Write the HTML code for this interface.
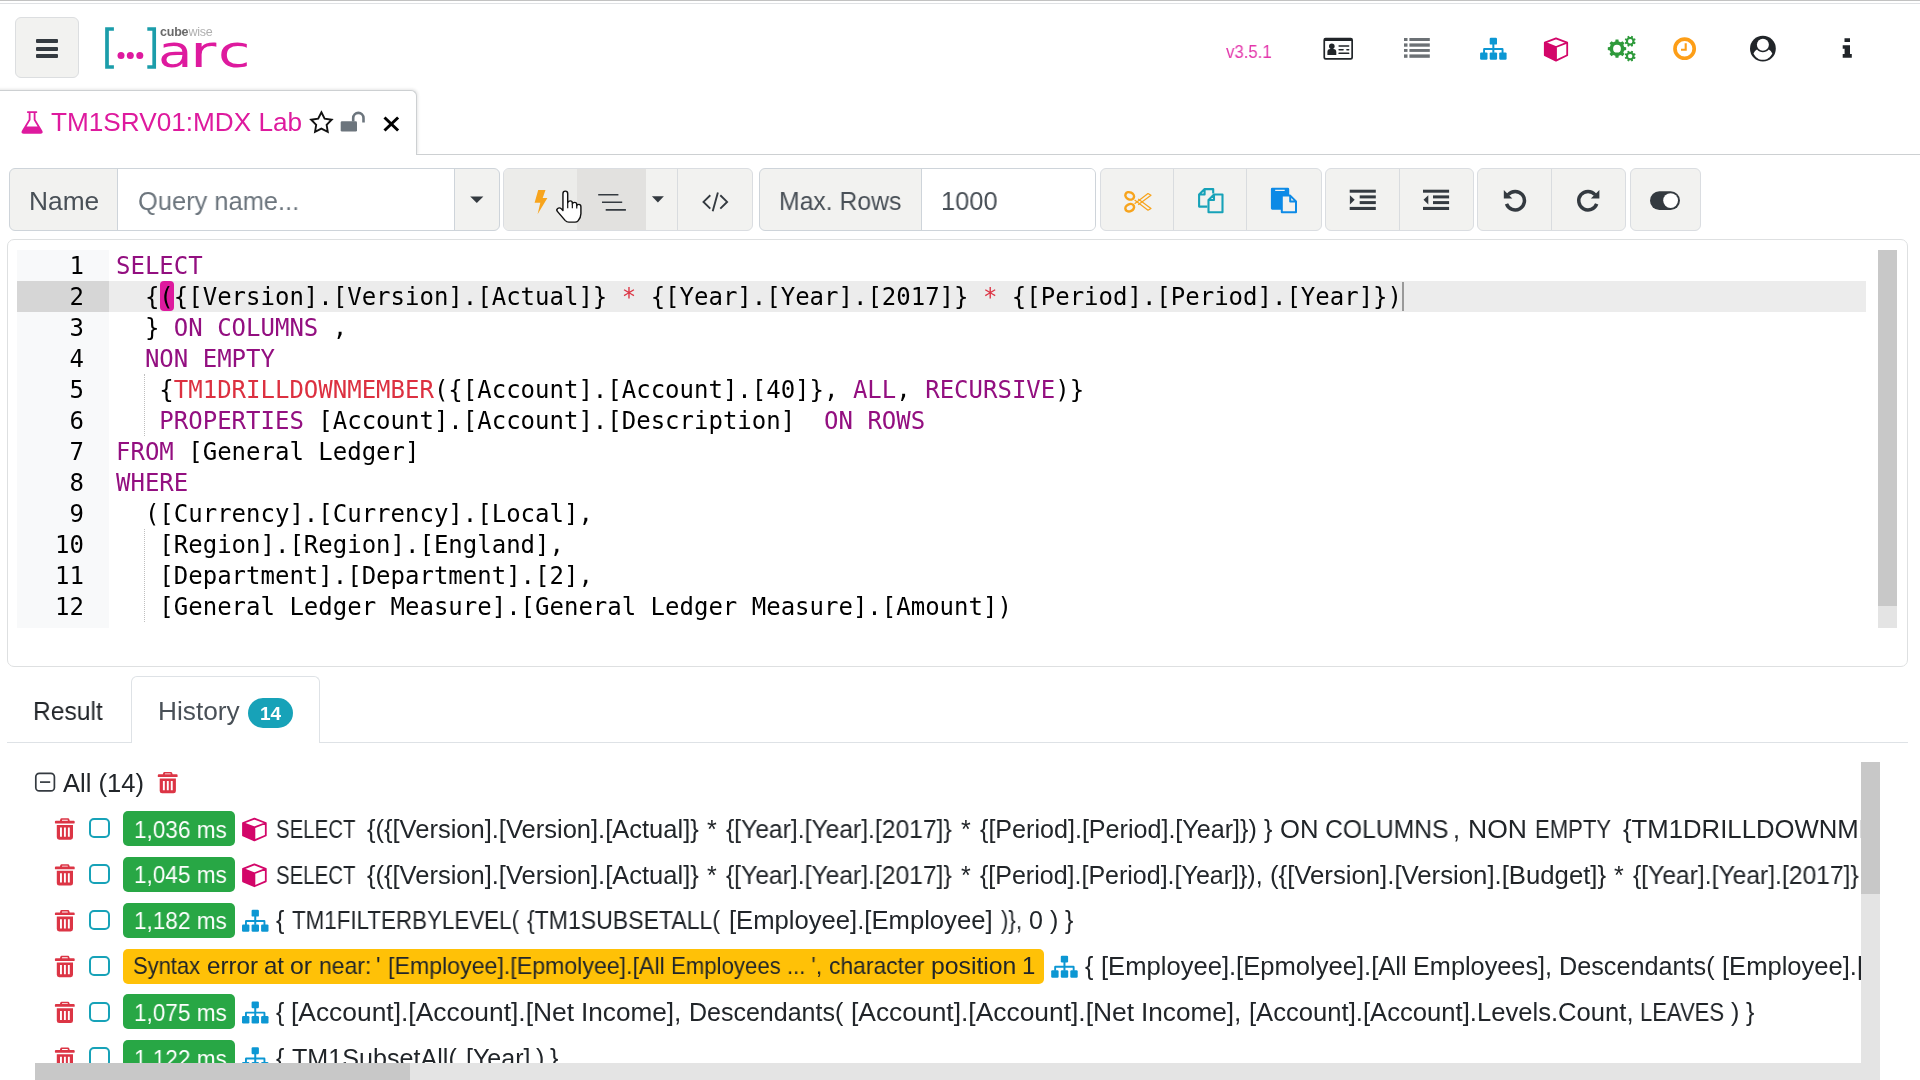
<!DOCTYPE html>
<html lang="en">
<head>
<meta charset="utf-8">
<title>Arc - TM1SRV01:MDX Lab</title>
<style>
*{box-sizing:border-box;margin:0;padding:0}
html,body{width:1920px;height:1080px;overflow:hidden;background:#fff}
body{font-family:"Liberation Sans",sans-serif;color:#212529;position:relative}
.abs{position:absolute}
svg{position:absolute;overflow:visible}
.t{position:absolute;white-space:pre;line-height:1;transform-origin:0 50%;will-change:transform}
.line0{left:0;top:0;width:1920px;height:1px;background:#c2c2c2}
.line1{left:0;top:3px;width:1920px;height:1px;background:#dfe1e4}
.menu-btn{left:15px;top:17px;width:64px;height:61px;border:1px solid #dcdee0;border-radius:6px;background:#f2f2f0}
.menu-btn i{position:absolute;left:20px;width:22px;height:4px;border-radius:1px;background:#343a40}
.ptab{left:-4px;top:90px;width:421px;height:65px;border:1px solid #cdd0d2;border-bottom:none;border-radius:0 6px 0 0;background:#fff;box-shadow:1px -1px 3px rgba(0,0,0,.10);clip-path:inset(-6px -6px 0 0)}
.ptab-line{left:416px;top:154px;width:1504px;height:1px;background:#cdd0d2}
.grp{top:168px;height:63px;border:1px solid #dadde1;border-radius:6px;background:#f2f2f0;overflow:hidden}
.grp.ig{border-color:#ced4da}
.grp.ig .inp{border-color:#ced4da}
.grp .sep{position:absolute;top:0;width:1px;height:61px;background:#d9dcdf}
.grp .inp{position:absolute;top:0;height:61px;background:#fff;border-left:1px solid #d6dade;border-right:1px solid #d6dade}
.card{left:7px;top:239px;width:1901px;height:428px;border:1px solid #dee0e1;border-radius:7px;background:#fff}
.gutter{left:17px;top:250px;width:92px;height:378px;background:#f8f9fa}
.code{will-change:transform;font-family:"DejaVu Sans Mono","Liberation Mono",monospace;font-size:24px;line-height:31px;color:#000;white-space:pre}
.ln{left:17px;top:251px;width:92px;text-align:right;padding-right:25px}
.src{left:116px;top:251px}
.k{color:#930f80}.f{color:#dc3040}.o{color:#dc3545}
.nav-line{left:7px;top:742px;width:1901px;height:1px;background:#dee2e6}
.rtab{left:131px;top:676px;width:189px;height:67px;border:1px solid #dee2e6;border-bottom:none;border-radius:6px 6px 0 0;background:#fff}
.badge14{left:248px;top:698px;width:45px;height:30px;border-radius:15px;background:#17a2b8}
.hist{left:35px;top:762px;width:1826px;height:301px;overflow:hidden}
.bdg{position:absolute;height:35px;border-radius:5px;background:#28a745}
.bdg.w{background:#ffc107}
.cb{position:absolute;left:54px;width:21px;height:20px;border:2px solid #17a2b8;border-radius:5px;background:#fff}
.sb-t{background:#e4e4e4}.sb-h{background:#c8c8c8}
</style>
</head>
<body>
<div class="abs line0"></div><div class="abs line1"></div>

<!-- HEADER -->
<div class="abs menu-btn"><i style="top:21.4px"></i><i style="top:28.7px"></i><i style="top:36.2px"></i></div>
<div id="logo">
<svg style="left:105px;top:27px" width="52" height="42" viewBox="0 0 52 42">
  <path d="M8.900 2H2V40H8.900" fill="none" stroke="#1b9daa" stroke-width="3.700"/>
  <path d="M42.300 2H49.200V40H42.300" fill="none" stroke="#1b9daa" stroke-width="3.700"/>
  <circle cx="16" cy="28.400" r="3.500" fill="#de1a9e"/><circle cx="25.300" cy="28.400" r="3.500" fill="#de1a9e"/><circle cx="34.800" cy="28.400" r="3.500" fill="#de1a9e"/>
</svg>
<span class="t" style="left:160px;top:25.700px;font-size:12.500px;font-weight:bold;color:#6a6a6a;letter-spacing:-0.200px">cube<span style="color:#b0b0b0;font-weight:normal">wise</span></span>
<span class="arc"><span class="t" style="left:157.88px;top:28.800px;font-family:'DejaVu Sans','Liberation Sans',sans-serif;font-size:45px;color:#de1a9e;transform:scaleX(1.250);transform-origin:0 0">a</span><span class="t" style="left:190.06px;top:28.800px;font-family:'DejaVu Sans','Liberation Sans',sans-serif;font-size:45px;color:#de1a9e;transform:scaleX(1.425);transform-origin:0 0">r</span><span class="t" style="left:217.59px;top:28.800px;font-family:'DejaVu Sans','Liberation Sans',sans-serif;font-size:45px;color:#de1a9e;transform:scaleX(1.312);transform-origin:0 0">c</span></span>
</div>
<div id="hdr-icons">
<span class="t" style="left:1225.73px;top:44.19px;font-size:17.5px;color:#e336ab;transform:scaleX(0.9584)">v3.5.1</span>
<svg style="left:0;top:0" width="1920" height="90" viewBox="0 0 1920 90">
<g fill="#212529"><path fill-rule="evenodd" d="M1325.600 37.800h25.200a2.200 2.200 0 0 1 2.200 2.200v17.500a2.200 2.200 0 0 1 -2.200 2.200h-25.200a2.200 2.200 0 0 1 -2.200 -2.200v-17.500a2.200 2.200 0 0 1 2.200 -2.200zM1325.100 40.900v16.400a0.700 0.700 0 0 0 0.700 0.700h24.800a0.700 0.700 0 0 0 0.700 -0.700v-16.400z"/>
<circle cx="1331.800" cy="46.300" r="2.800"/><path d="M1327.400 55.100v-3.200a2.900 2.900 0 0 1 2.900 -2.900h3.100a2.900 2.900 0 0 1 2.900 2.900v3.200z"/>
<rect x="1338.400" y="45.200" width="11" height="1.500" rx="0.700"/><rect x="1338.400" y="48.900" width="5.400" height="1.500" rx="0.700"/><rect x="1346.200" y="48.900" width="3.200" height="1.500" rx="0.700"/><rect x="1338.400" y="52.600" width="11" height="1.500" rx="0.700"/></g>
<g fill="#6c7175">
<rect x="1404" y="38.0" width="3.500" height="3.0"/><rect x="1409.400" y="38.0" width="20.400" height="3.0"/>
<rect x="1404" y="43.4" width="3.500" height="3.3"/><rect x="1409.400" y="43.4" width="20.400" height="3.3"/>
<rect x="1404" y="49.0" width="3.500" height="2.9"/><rect x="1409.400" y="49.0" width="20.400" height="2.9"/>
<rect x="1404" y="54.4" width="3.500" height="3.4"/><rect x="1409.400" y="54.4" width="20.400" height="3.4"/>
</g>
<g fill="#0c97d3" transform="translate(1480.1 37.8)"><rect x="9.600" y="0" width="7.300" height="6.800" rx="1.200"/><rect x="12.250" y="6" width="2" height="9"/><path d="M3 15.200v-3.800a1.200 1.200 0 0 1 1.200 -1.200h18a1.200 1.200 0 0 1 1.200 1.200v3.800h-1.900v-3.100h-16.600v3.100z"/><rect x="0" y="14.600" width="7.400" height="7.400" rx="1.200"/><rect x="9.600" y="14.600" width="7.400" height="7.400" rx="1.200"/><rect x="19.100" y="14.600" width="7.400" height="7.400" rx="1.200"/></g>
<g fill="none" stroke="#d30669" stroke-width="1.800" stroke-linejoin="round"><path d="M1556 38.400L1567.200 42.700V55.200L1556 60.600L1544.800 55.200V42.700Z"/><path d="M1544.800 42.700L1556 47L1567.200 42.700M1556 47V60.600"/></g><path fill="#d30669" d="M1544.800 42.700L1556 47V60.600L1544.800 55.200Z"/>
<g fill="#2e9a3b" fill-rule="evenodd"><path d="M1624.20 46.92 L1626.19 47.20 L1626.19 50.10 L1624.20 50.38 L1623.31 52.52 L1624.52 54.12 L1622.47 56.17 L1620.87 54.96 L1618.73 55.85 L1618.45 57.84 L1615.55 57.84 L1615.27 55.85 L1613.13 54.96 L1611.53 56.17 L1609.48 54.12 L1610.69 52.52 L1609.80 50.38 L1607.81 50.10 L1607.81 47.20 L1609.80 46.92 L1610.69 44.78 L1609.48 43.18 L1611.53 41.13 L1613.13 42.34 L1615.27 41.45 L1615.55 39.46 L1618.45 39.46 L1618.73 41.45 L1620.87 42.34 L1622.47 41.13 L1624.52 43.18 L1623.31 44.78Z M1620.90 48.65 A3.9 3.9 0 1 0 1613.10 48.65 A3.9 3.9 0 1 0 1620.90 48.65Z"/><path d="M1634.45 41.87 L1635.65 42.51 L1634.97 44.13 L1633.68 43.73 L1632.73 44.68 L1633.13 45.97 L1631.51 46.65 L1630.87 45.45 L1629.53 45.45 L1628.89 46.65 L1627.27 45.97 L1627.67 44.68 L1626.72 43.73 L1625.43 44.13 L1624.75 42.51 L1625.95 41.87 L1625.95 40.53 L1624.75 39.89 L1625.43 38.27 L1626.72 38.67 L1627.67 37.72 L1627.27 36.43 L1628.89 35.75 L1629.53 36.95 L1630.87 36.95 L1631.51 35.75 L1633.13 36.43 L1632.73 37.72 L1633.68 38.67 L1634.97 38.27 L1635.65 39.89 L1634.45 40.53Z M1632.40 41.20 A2.2 2.2 0 1 0 1628.00 41.20 A2.2 2.2 0 1 0 1632.40 41.20Z"/><path d="M1634.45 56.77 L1635.65 57.41 L1634.97 59.03 L1633.68 58.63 L1632.73 59.58 L1633.13 60.87 L1631.51 61.55 L1630.87 60.35 L1629.53 60.35 L1628.89 61.55 L1627.27 60.87 L1627.67 59.58 L1626.72 58.63 L1625.43 59.03 L1624.75 57.41 L1625.95 56.77 L1625.95 55.43 L1624.75 54.79 L1625.43 53.17 L1626.72 53.57 L1627.67 52.62 L1627.27 51.33 L1628.89 50.65 L1629.53 51.85 L1630.87 51.85 L1631.51 50.65 L1633.13 51.33 L1632.73 52.62 L1633.68 53.57 L1634.97 53.17 L1635.65 54.79 L1634.45 55.43Z M1632.40 56.10 A2.2 2.2 0 1 0 1628.00 56.10 A2.2 2.2 0 1 0 1632.40 56.10Z"/></g>
<circle cx="1684.600" cy="48.650" r="9.600" fill="none" stroke="#fd9e17" stroke-width="3.700"/><path d="M1685.700 43.200V49.800H1681" fill="none" stroke="#fd9e17" stroke-width="2.100"/>
<circle cx="1762.900" cy="48.650" r="12.900" fill="#212529"/><circle cx="1762.900" cy="44.700" r="6" fill="#fff"/><path fill="#fff" d="M1753.500 53.400C1754.400 51.600 1755.600 50.300 1757 49.500C1758.600 51.200 1760.600 52.200 1762.900 52.200C1765.200 52.200 1767.200 51.200 1768.800 49.500C1770.200 50.300 1771.400 51.600 1772.300 53.400C1770.600 57.200 1767 59.800 1762.900 59.800C1758.800 59.800 1755.200 57.200 1753.500 53.400Z"/>
<path fill="#212529" d="M1844.500 38.200h5.500v3.700h-5.500zM1842.700 45.300h7.300v8.800h1.800v3.700h-9.100v-3.700h1.900v-5.400h-1.900z"/>
</svg></div>

<!-- PAGE TAB -->
<div class="abs ptab"></div><div class="abs ptab-line"></div>
<div id="ptab-content">
<svg style="left:0;top:90px" width="420" height="65" viewBox="0 90 420 65">
<path fill="#de1a9e" fill-rule="evenodd" d="M27.800 111.200h8.600a0.900 0.900 0 0 1 0 1.800h-0.900v6.600l6.800 11.200c1 1.700 0 3 -1.900 3h-16.600c-1.900 0 -2.900 -1.300 -1.900 -3l6.800 -11.200v-6.600h-0.900a0.900 0.900 0 0 1 0 -1.800zM30.500 113v7.100l-3.900 6.400h11l-3.900 -6.400v-7.100z"/>
<path d="M321.40 112.30 L324.63 118.65 L331.67 119.76 L326.63 124.80 L327.75 131.84 L321.40 128.60 L315.05 131.84 L316.17 124.80 L311.13 119.76 L318.17 118.65Z" fill="none" stroke="#111" stroke-width="1.900" stroke-linejoin="miter"/>
<rect x="340.700" y="121.200" width="16.300" height="10.400" rx="1.300" fill="#6c757d"/><path d="M353.200 121.500v-3.500a5.150 5.150 0 0 1 10.300 0v4.500" fill="none" stroke="#6c757d" stroke-width="2.600"/>
<path d="M384.500 117.500L398.100 130.500M398.100 117.500L384.500 130.500" stroke="#000" stroke-width="3" fill="none"/>
</svg>
<span class="t" style="left:51.27px;top:108.79px;font-size:26px;color:#de1a9e;transform:scaleX(1.0064)">TM1SRV01:MDX Lab</span>
</div>

<!-- TOOLBAR -->
<div id="toolbar">
<div class="abs grp ig" style="left:9px;width:491px"><div class="inp" style="left:107px;width:338px"></div></div>
<div class="abs grp" style="left:503px;width:250px"><div class="abs" style="left:0;top:0;width:73px;height:61px;background:#ececea"></div><div class="abs" style="left:73px;top:0;width:69px;height:61px;background:#e2e1df"></div><div class="sep" style="left:173px"></div></div>
<div class="abs grp ig" style="left:759px;width:337px"><div class="inp" style="left:161px;width:175px;border-right:none"></div></div>
<div class="abs grp" style="left:1100px;width:222px"><div class="sep" style="left:71.500px"></div><div class="sep" style="left:144.500px"></div></div>
<div class="abs grp" style="left:1325px;width:149px"><div class="sep" style="left:72.500px"></div></div>
<div class="abs grp" style="left:1477px;width:149px"><div class="sep" style="left:72.500px"></div></div>
<div class="abs grp" style="left:1630px;width:71px"></div>
<span class="t" style="left:28.71px;top:188.09px;font-size:26px;color:#495057;transform:scaleX(1.0119)">Name</span>
<span class="t" style="left:137.53px;top:188.09px;font-size:26px;color:#6c757d;transform:scaleX(0.9787)">Query name...</span>
<span class="t" style="left:778.93px;top:187.99px;font-size:26px;color:#495057;transform:scaleX(0.9525)">Max. Rows</span>
<span class="t" style="left:941.28px;top:187.99px;font-size:26px;color:#495057;transform:scaleX(0.9764)">1000</span>
<svg style="left:0;top:160px" width="1920" height="80" viewBox="0 160 1920 80">
<path fill="#343a40" d="M470.200 196.400h13.200l-6.600 6.600z"/>
<path fill="#f7a41d" d="M538.200 190h7.300l-2.800 8h4.700l-9.800 16.200l2.700 -11.400h-5.700z"/>
<g stroke="#343a40" stroke-width="1.600" fill="none"><path d="M598.200 194.700h20.200M602 202.300h20.200M605.700 209.900h20.200"/></g>
<path fill="#343a40" d="M651.900 196.300h12l-6 6.100z"/>
<g stroke="#343a40" stroke-width="1.900" fill="none"><path d="M710.300 195.200l-6.800 6.700l6.800 6.700M720.300 195.200l6.800 6.700l-6.800 6.700M717.900 192.600l-5.200 18.600"/></g>
<g transform="translate(556.4 190.800) scale(1.190 1.060) translate(-556.400 -190.600)"><path d="M561.900 193.300c0 -1.600 1 -2.400 2 -2.400s2 0.800 2 2.400v8.600c0.300 -1.300 1.100 -1.900 2 -1.900s1.900 0.700 1.900 2v1.200c0.300 -1.100 1 -1.600 1.900 -1.600s1.800 0.600 1.800 1.900v1.300c0.300 -0.900 0.900 -1.300 1.700 -1.300c1 0 1.800 0.700 1.800 2.200v6.600c0 3.200 -1.300 5.200 -2.400 6.600c-0.700 0.900 -1.500 1.300 -2.600 1.300h-5.100c-1.300 0 -2.300 -0.600 -3.200 -1.700l-6.300 -8.200c-0.900 -1.200 -0.800 -2.400 0.100 -3.100c1 -0.800 2.200 -0.500 3.100 0.500l1.300 1.500z" fill="#fff" stroke="#111" stroke-width="1.200" stroke-linejoin="round"/><path d="M565.900 202v5M569.800 203.300v3.700M573.500 204.800v2.500" stroke="#111" stroke-width="1" fill="none"/></g>
<g fill="none" stroke="#f7a41d"><ellipse cx="1129.700" cy="195.900" rx="4.500" ry="3.500" stroke-width="2.500" transform="rotate(25 1129.700 195.900)"/><ellipse cx="1129.700" cy="207.700" rx="4.500" ry="3.500" stroke-width="2.500" transform="rotate(-25 1129.700 207.700)"/><path stroke-width="1.200" stroke-linejoin="round" d="M1134.600 203.800L1148 193.500L1151 195.300L1138.200 204.700M1134.600 199.900L1148 210.200L1151 208.400L1138.200 199"/></g>
<g fill="none" stroke="#17a2b8" stroke-width="2.100" stroke-linejoin="round"><path d="M1207.400 206.600h-8.300v-12.100l5.500 -5.400h8.600v4.400M1204.600 189.100v5.400h-5.500"/><path d="M1208.500 212.300v-12.300l5.500 -5.500h8.500v17.800z M1214 194.500v5.500h-5.500"/></g>
<path fill="#0d8ae6" d="M1272.300 187.800h15.500a1.400 1.400 0 0 1 1.400 1.400v19.100a1.400 1.400 0 0 1 -1.400 1.400h-15.500a1.400 1.400 0 0 1 -1.400 -1.400v-19.100a1.400 1.400 0 0 1 1.400 -1.400zM1275.200 189.700v1.200h9.500v-1.200z"/><path fill="#f2f2f0" stroke="#0d8ae6" stroke-width="2" stroke-linejoin="round" d="M1281.800 212.300v-16.700h8.400l5.800 5.800v10.900zM1290.200 195.600v5.800h5.800"/>
<g fill="#343a40"><rect x="1349.700" y="189.700" width="26.100" height="3"/><rect x="1359.700" y="195.400" width="16.100" height="3"/><rect x="1359.700" y="201.100" width="16.100" height="3"/><rect x="1349.700" y="206.900" width="26.100" height="3.100"/><path d="M1349.900 195.200l4.800 4.600l-4.800 4.600z"/></g>
<g fill="#343a40"><rect x="1423" y="189.700" width="26.100" height="3"/><rect x="1433" y="195.400" width="16.100" height="3"/><rect x="1433" y="201.100" width="16.100" height="3"/><rect x="1423" y="206.900" width="26.100" height="3.100"/><path d="M1428.300 195.200l-4.800 4.600l4.800 4.600z"/></g>
<path fill="none" stroke="#343a40" stroke-width="3.500" d="M1508.100 194.750A9.250 9.250 0 1 1 1506.500 203.860"/><path fill="#343a40" d="M1503.800 190l8.500 8.400h-8.500z"/>
<path fill="none" stroke="#343a40" stroke-width="3.500" d="M1595.100 194.750A9.250 9.250 0 1 0 1596.700 203.860"/><path fill="#343a40" d="M1599.400 190l-8.500 8.400h8.500z"/>
<rect x="1650" y="191.200" width="30" height="18.800" rx="9.400" fill="#343a40"/><circle cx="1670.600" cy="200.600" r="7.400" fill="#fff"/>
</svg></div>

<!-- EDITOR -->
<div class="abs card"></div>
<div id="editor">
<div class="abs gutter"></div>
<div class="abs" style="left:17px;top:281px;width:92px;height:31px;background:#d6d6d6"></div>
<div class="abs" style="left:109px;top:281px;width:1757px;height:31px;background:#ececec"></div>
<div class="abs" style="left:160.300px;top:281.300px;width:13.500px;height:30.200px;background:#de1a9e;border-radius:4px"></div>
<div class="abs" style="left:144.3px;top:374px;width:0;height:62px;border-left:1px dotted #bfbfbf"></div>
<div class="abs" style="left:144.3px;top:529px;width:0;height:93px;border-left:1px dotted #bfbfbf"></div>
<div class="abs" style="left:1402px;top:282px;width:2px;height:29px;background:#999"></div>
<pre class="abs code ln">1
2
3
4
5
6
7
8
9
10
11
12</pre>
<pre class="abs code src"><span class="k">SELECT</span>
  {({[Version].[Version].[Actual]} <span class="o">*</span> {[Year].[Year].[2017]} <span class="o">*</span> {[Period].[Period].[Year]})
  } <span class="k">ON</span> <span class="k">COLUMNS</span> ,
  <span class="k">NON</span> <span class="k">EMPTY</span>
   {<span class="f">TM1DRILLDOWNMEMBER</span>({[Account].[Account].[40]}, <span class="k">ALL</span>, <span class="k">RECURSIVE</span>)}
   <span class="k">PROPERTIES</span> [Account].[Account].[Description]  <span class="k">ON</span> <span class="k">ROWS</span>
<span class="k">FROM</span> [General Ledger]
<span class="k">WHERE</span>
  ([Currency].[Currency].[Local],
   [Region].[Region].[England],
   [Department].[Department].[2],
   [General Ledger Measure].[General Ledger Measure].[Amount])</pre>
<div class="abs sb-t" style="left:1878px;top:250px;width:19px;height:378px"></div>
<div class="abs sb-h" style="left:1878px;top:250px;width:19px;height:356px"></div>
</div>

<!-- RESULTS -->
<div id="results">
<div class="abs nav-line"></div>
<div class="abs rtab"></div>
<span class="t" style="left:33.45px;top:697.99px;font-size:26px;color:#212529;transform:scaleX(0.9461)">Result</span>
<span class="t" style="left:157.92px;top:697.99px;font-size:26px;color:#495057;transform:scaleX(1.0092)">History</span>
<div class="abs badge14"></div>
<span class="t" style="left:260.37px;top:703.82px;font-size:19px;color:#fff;font-weight:bold;transform:scaleX(0.9858)">14</span>
<svg style="left:0;top:762px" width="200" height="40" viewBox="0 762 200 40"><rect x="35.800" y="773.300" width="18.600" height="17.600" rx="3.500" fill="none" stroke="#343a40" stroke-width="1.700"/><path d="M40 782.100h10.200" stroke="#343a40" stroke-width="1.700"/><g fill="#dc3545" transform="translate(157.9 771.9)"><path d="M6.700 0h6.400a1.200 1.200 0 0 1 1.100 0.800l0.500 1.600h4a1 1 0 0 1 1 1v1.100a0.600 0.600 0 0 1 -0.600 0.600h-18.600a0.600 0.600 0 0 1 -0.600 -0.600v-1.100a1 1 0 0 1 1 -1h4l0.500 -1.600a1.200 1.200 0 0 1 1.100 -0.800zM7.200 1.500l-0.300 0.900h6l-0.300 -0.900z"/><path fill-rule="evenodd" d="M1.800 6.600h16.200v12.400a2.400 2.400 0 0 1 -2.400 2.400h-11.400a2.400 2.400 0 0 1 -2.400 -2.400zM5 9.200v9.200h1.900v-9.200zM8.950 9.200v9.200h1.900v-9.200zM12.900 9.200v9.200h1.900v-9.200z"/></g></svg>
<span class="t" style="left:63.31px;top:770.74px;font-size:25px;color:#212529;transform:scaleX(1.0215)">All (14)</span>
<div class="abs hist">
<div class="bdg" style="left:88px;top:49.00px;width:111.800px"></div>
<div class="cb" style="top:56.10px"></div>
<div class="bdg" style="left:88px;top:94.85px;width:111.800px"></div>
<div class="cb" style="top:101.95px"></div>
<div class="bdg" style="left:88px;top:140.70px;width:111.800px"></div>
<div class="cb" style="top:147.80px"></div>
<div class="bdg w" style="left:88px;top:186.55px;width:920.75px"></div>
<div class="cb" style="top:193.65px"></div>
<div class="bdg" style="left:88px;top:232.40px;width:111.800px"></div>
<div class="cb" style="top:239.50px"></div>
<div class="bdg" style="left:88px;top:278.25px;width:111.800px"></div>
<div class="cb" style="top:285.35px"></div>
<svg style="left:0;top:0" width="1826" height="301" viewBox="35 762 1826 301">
<g transform="translate(242 817.7)"><path fill="none" stroke="#d30669" stroke-width="1.800" stroke-linejoin="round" d="M12.400 0.900L23.800 5.300V17.800L12.400 22.700L1 17.800V5.300ZM1 5.300L12.400 9.700L23.800 5.300M12.400 9.700V22.700"/><path fill="#d30669" d="M1 5.300L12.400 9.700V22.700L1 17.800Z"/></g>
<g fill="#dc3545" transform="translate(55 818.3)"><path d="M6.700 0h6.400a1.200 1.200 0 0 1 1.100 0.800l0.500 1.600h4a1 1 0 0 1 1 1v1.100a0.600 0.600 0 0 1 -0.600 0.600h-18.600a0.600 0.600 0 0 1 -0.600 -0.600v-1.100a1 1 0 0 1 1 -1h4l0.500 -1.600a1.200 1.200 0 0 1 1.100 -0.800zM7.200 1.500l-0.300 0.900h6l-0.300 -0.900z"/><path fill-rule="evenodd" d="M1.800 6.600h16.200v12.400a2.400 2.400 0 0 1 -2.400 2.400h-11.400a2.400 2.400 0 0 1 -2.400 -2.400zM5 9.200v9.200h1.900v-9.200zM8.950 9.200v9.200h1.900v-9.200zM12.900 9.200v9.200h1.900v-9.200z"/></g>
<g transform="translate(242 863.5500000000001)"><path fill="none" stroke="#d30669" stroke-width="1.800" stroke-linejoin="round" d="M12.400 0.900L23.800 5.300V17.800L12.400 22.700L1 17.800V5.300ZM1 5.300L12.400 9.700L23.800 5.300M12.400 9.700V22.700"/><path fill="#d30669" d="M1 5.300L12.400 9.700V22.700L1 17.800Z"/></g>
<g fill="#dc3545" transform="translate(55 864.15)"><path d="M6.700 0h6.400a1.200 1.200 0 0 1 1.100 0.800l0.500 1.600h4a1 1 0 0 1 1 1v1.100a0.600 0.600 0 0 1 -0.600 0.600h-18.600a0.600 0.600 0 0 1 -0.600 -0.600v-1.100a1 1 0 0 1 1 -1h4l0.500 -1.600a1.200 1.200 0 0 1 1.100 -0.800zM7.200 1.500l-0.300 0.900h6l-0.300 -0.900z"/><path fill-rule="evenodd" d="M1.800 6.600h16.200v12.400a2.400 2.400 0 0 1 -2.400 2.400h-11.400a2.400 2.400 0 0 1 -2.400 -2.400zM5 9.200v9.200h1.900v-9.200zM8.950 9.200v9.200h1.900v-9.200zM12.900 9.200v9.200h1.900v-9.200z"/></g>
<g fill="#0c97d3" transform="translate(242 909.8000000000001)"><rect x="9.600" y="0" width="7.300" height="6.800" rx="1.200"/><rect x="12.250" y="6" width="2" height="9"/><path d="M3 15.200v-3.800a1.200 1.200 0 0 1 1.200 -1.200h18a1.200 1.200 0 0 1 1.200 1.200v3.800h-1.900v-3.100h-16.600v3.100z"/><rect x="0" y="14.600" width="7.400" height="7.400" rx="1.200"/><rect x="9.600" y="14.600" width="7.400" height="7.400" rx="1.200"/><rect x="19.100" y="14.600" width="7.400" height="7.400" rx="1.200"/></g>
<g fill="#dc3545" transform="translate(55 910.0)"><path d="M6.700 0h6.400a1.200 1.200 0 0 1 1.100 0.800l0.500 1.600h4a1 1 0 0 1 1 1v1.100a0.600 0.600 0 0 1 -0.600 0.600h-18.600a0.600 0.600 0 0 1 -0.600 -0.600v-1.100a1 1 0 0 1 1 -1h4l0.500 -1.600a1.200 1.200 0 0 1 1.100 -0.800zM7.200 1.500l-0.300 0.900h6l-0.300 -0.900z"/><path fill-rule="evenodd" d="M1.800 6.600h16.200v12.400a2.400 2.400 0 0 1 -2.400 2.400h-11.400a2.400 2.400 0 0 1 -2.400 -2.400zM5 9.200v9.200h1.900v-9.200zM8.950 9.200v9.200h1.900v-9.200zM12.900 9.200v9.200h1.900v-9.200z"/></g>
<g fill="#0c97d3" transform="translate(1051.2 955.65)"><rect x="9.600" y="0" width="7.300" height="6.800" rx="1.200"/><rect x="12.250" y="6" width="2" height="9"/><path d="M3 15.200v-3.800a1.200 1.200 0 0 1 1.200 -1.200h18a1.200 1.200 0 0 1 1.200 1.200v3.800h-1.900v-3.100h-16.600v3.100z"/><rect x="0" y="14.600" width="7.400" height="7.400" rx="1.200"/><rect x="9.600" y="14.600" width="7.400" height="7.400" rx="1.200"/><rect x="19.100" y="14.600" width="7.400" height="7.400" rx="1.200"/></g>
<g fill="#dc3545" transform="translate(55 955.8499999999999)"><path d="M6.700 0h6.400a1.200 1.200 0 0 1 1.100 0.800l0.500 1.600h4a1 1 0 0 1 1 1v1.100a0.600 0.600 0 0 1 -0.600 0.600h-18.600a0.600 0.600 0 0 1 -0.600 -0.600v-1.100a1 1 0 0 1 1 -1h4l0.500 -1.600a1.200 1.200 0 0 1 1.100 -0.800zM7.200 1.500l-0.300 0.900h6l-0.300 -0.900z"/><path fill-rule="evenodd" d="M1.800 6.600h16.200v12.400a2.400 2.400 0 0 1 -2.400 2.400h-11.400a2.400 2.400 0 0 1 -2.400 -2.400zM5 9.200v9.200h1.900v-9.200zM8.950 9.200v9.200h1.900v-9.200zM12.900 9.200v9.200h1.900v-9.200z"/></g>
<g fill="#0c97d3" transform="translate(242 1001.5)"><rect x="9.600" y="0" width="7.300" height="6.800" rx="1.200"/><rect x="12.250" y="6" width="2" height="9"/><path d="M3 15.200v-3.800a1.200 1.200 0 0 1 1.200 -1.200h18a1.200 1.200 0 0 1 1.200 1.200v3.800h-1.900v-3.100h-16.600v3.100z"/><rect x="0" y="14.600" width="7.400" height="7.400" rx="1.200"/><rect x="9.600" y="14.600" width="7.400" height="7.400" rx="1.200"/><rect x="19.100" y="14.600" width="7.400" height="7.400" rx="1.200"/></g>
<g fill="#dc3545" transform="translate(55 1001.6999999999999)"><path d="M6.700 0h6.400a1.200 1.200 0 0 1 1.100 0.800l0.500 1.600h4a1 1 0 0 1 1 1v1.100a0.600 0.600 0 0 1 -0.600 0.600h-18.600a0.600 0.600 0 0 1 -0.600 -0.600v-1.100a1 1 0 0 1 1 -1h4l0.500 -1.600a1.200 1.200 0 0 1 1.100 -0.800zM7.200 1.500l-0.300 0.900h6l-0.300 -0.900z"/><path fill-rule="evenodd" d="M1.800 6.600h16.200v12.400a2.400 2.400 0 0 1 -2.400 2.400h-11.400a2.400 2.400 0 0 1 -2.400 -2.400zM5 9.200v9.200h1.900v-9.200zM8.950 9.200v9.200h1.900v-9.200zM12.900 9.200v9.200h1.900v-9.200z"/></g>
<g fill="#0c97d3" transform="translate(242 1047.35)"><rect x="9.600" y="0" width="7.300" height="6.800" rx="1.200"/><rect x="12.250" y="6" width="2" height="9"/><path d="M3 15.200v-3.800a1.200 1.200 0 0 1 1.200 -1.200h18a1.200 1.200 0 0 1 1.200 1.200v3.800h-1.900v-3.100h-16.600v3.100z"/><rect x="0" y="14.600" width="7.400" height="7.400" rx="1.200"/><rect x="9.600" y="14.600" width="7.400" height="7.400" rx="1.200"/><rect x="19.100" y="14.600" width="7.400" height="7.400" rx="1.200"/></g>
<g fill="#dc3545" transform="translate(55 1047.55)"><path d="M6.700 0h6.400a1.200 1.200 0 0 1 1.100 0.800l0.500 1.600h4a1 1 0 0 1 1 1v1.100a0.600 0.600 0 0 1 -0.600 0.600h-18.600a0.600 0.600 0 0 1 -0.600 -0.600v-1.100a1 1 0 0 1 1 -1h4l0.500 -1.600a1.200 1.200 0 0 1 1.100 -0.800zM7.200 1.500l-0.300 0.900h6l-0.300 -0.900z"/><path fill-rule="evenodd" d="M1.800 6.600h16.200v12.400a2.400 2.400 0 0 1 -2.400 2.400h-11.400a2.400 2.400 0 0 1 -2.400 -2.400zM5 9.200v9.200h1.900v-9.200zM8.950 9.200v9.200h1.900v-9.200zM12.900 9.200v9.200h1.900v-9.200z"/></g>
</svg>
<span class="t" style="left:240.83px;top:54.74px;font-size:25px;color:#212529;transform:scaleX(0.8171)">SELECT</span>
<span class="t" style="left:331.63px;top:54.74px;font-size:25px;color:#212529;transform:scaleX(1.0201)">{({[Version].[Version].[Actual]}</span>
<span class="t" style="left:671.93px;top:54.74px;font-size:25px;color:#212529">*</span>
<span class="t" style="left:690.90px;top:54.74px;font-size:25px;color:#212529;transform:scaleX(0.9859)">{[Year].[Year].[2017]}</span>
<span class="t" style="left:925.68px;top:54.74px;font-size:25px;color:#212529">*</span>
<span class="t" style="left:240.83px;top:100.59px;font-size:25px;color:#212529;transform:scaleX(0.8171)">SELECT</span>
<span class="t" style="left:331.63px;top:100.59px;font-size:25px;color:#212529;transform:scaleX(1.0201)">{({[Version].[Version].[Actual]}</span>
<span class="t" style="left:671.93px;top:100.59px;font-size:25px;color:#212529">*</span>
<span class="t" style="left:690.90px;top:100.59px;font-size:25px;color:#212529;transform:scaleX(0.9859)">{[Year].[Year].[2017]}</span>
<span class="t" style="left:925.68px;top:100.59px;font-size:25px;color:#212529">*</span>
<span class="t" style="left:944.64px;top:54.74px;font-size:25px;color:#212529;transform:scaleX(1.0042)">{[Period].[Period].[Year]})</span>
<span class="t" style="left:1228.88px;top:54.74px;font-size:25px;color:#212529">}</span>
<span class="t" style="left:1244.58px;top:54.74px;font-size:25px;color:#212529;transform:scaleX(1.0264)">ON</span>
<span class="t" style="left:1290.04px;top:54.74px;font-size:25px;color:#212529;transform:scaleX(0.9881)">COLUMNS</span>
<span class="t" style="left:1418.31px;top:54.74px;font-size:25px;color:#212529">,</span>
<span class="t" style="left:1432.99px;top:54.74px;font-size:25px;color:#212529;transform:scaleX(1.0610)">NON</span>
<span class="t" style="left:1499.58px;top:54.74px;font-size:25px;color:#212529;transform:scaleX(0.8821)">EMPTY</span>
<span class="t" style="left:1587.93px;top:54.74px;font-size:25px;color:#212529;transform:scaleX(1.0288)">{TM1DRILLDOWNMEMBER({[Account].[Account].[40]}, ALL, RECURSIVE)} PROPERTIES [Account].[Account].[Description] ON ROWS FROM [General Ledger] WHERE ([Currency].[Currency].[Local], [Region].[Region].[England], [Department].[Department].[2], [General Ledger Measure].[General Ledger Measure].[Amount])</span>
<span class="t" style="left:944.64px;top:100.59px;font-size:25px;color:#212529">{[Period].[Period].[Year]}),</span>
<span class="t" style="left:1234.69px;top:100.59px;font-size:25px;color:#212529;transform:scaleX(1.0291)">({[Version].[Version].[Budget]}</span>
<span class="t" style="left:1579.43px;top:100.59px;font-size:25px;color:#212529">*</span>
<span class="t" style="left:1597.95px;top:100.59px;font-size:25px;color:#212529;transform:scaleX(0.9859)">{[Year].[Year].[2017]}</span>
<span class="t" style="left:1832.43px;top:100.59px;font-size:25px;color:#212529">* {[Period].[Period].[Year]}) } ON COLUMNS , NON EMPTY {TM1DRILLDOWNMEMBER({[Account].[Account].[40]}, ALL, RECURSIVE)} PROPERTIES [Account].[Account].[Description] ON ROWS FROM [General Ledger]</span>
<span class="t" style="left:240.50px;top:146.44px;font-size:25px;color:#212529">{</span>
<span class="t" style="left:257.04px;top:146.44px;font-size:25px;color:#212529;transform:scaleX(0.8945)">TM1FILTERBYLEVEL(</span>
<span class="t" style="left:492.17px;top:146.44px;font-size:25px;color:#212529;transform:scaleX(0.9221)">{TM1SUBSETALL(</span>
<span class="t" style="left:694.49px;top:146.44px;font-size:25px;color:#212529;transform:scaleX(1.0251)">[Employee].[Employee]</span>
<span class="t" style="left:965.80px;top:146.44px;font-size:25px;color:#212529;transform:scaleX(0.8874)">)},</span>
<span class="t" style="left:994.24px;top:146.44px;font-size:25px;color:#212529">0</span>
<span class="t" style="left:1015.01px;top:146.44px;font-size:25px;color:#212529">)</span>
<span class="t" style="left:1030.13px;top:146.44px;font-size:25px;color:#212529">}</span>
<span class="t" style="left:97.52px;top:192.13px;font-size:24px;color:#212529;transform:scaleX(0.9155)">Syntax</span>
<span class="t" style="left:171.60px;top:192.13px;font-size:24px;color:#212529;transform:scaleX(1.0073)">error</span>
<span class="t" style="left:228.82px;top:192.13px;font-size:24px;color:#212529;transform:scaleX(0.9825)">at</span>
<span class="t" style="left:254.88px;top:192.13px;font-size:24px;color:#212529;transform:scaleX(1.0331)">or</span>
<span class="t" style="left:283.79px;top:192.13px;font-size:24px;color:#212529;transform:scaleX(0.9567)">near:</span>
<span class="t" style="left:341.24px;top:192.13px;font-size:24px;color:#212529">'</span>
<span class="t" style="left:353.40px;top:192.13px;font-size:24px;color:#212529;transform:scaleX(0.9648)">[Employee].[Epmolyee].[All</span>
<span class="t" style="left:635.78px;top:192.13px;font-size:24px;color:#212529;transform:scaleX(0.9243)">Employees ... ',</span>
<span class="t" style="left:793.65px;top:192.13px;font-size:24px;color:#212529;transform:scaleX(0.9529)">character</span>
<span class="t" style="left:895.92px;top:192.13px;font-size:24px;color:#212529;transform:scaleX(1.0320)">position</span>
<span class="t" style="left:986.70px;top:192.13px;font-size:24px;color:#212529">1</span>
<span class="t" style="left:1049.87px;top:192.29px;font-size:25px;color:#212529">{</span>
<span class="t" style="left:1065.74px;top:192.29px;font-size:25px;color:#212529;transform:scaleX(1.0234)">[Employee].[Epmolyee].[All</span>
<span class="t" style="left:1378.09px;top:192.29px;font-size:25px;color:#212529;transform:scaleX(1.0113)">Employees],</span>
<span class="t" style="left:1523.99px;top:192.29px;font-size:25px;color:#212529;transform:scaleX(1.0084)">Descendants(</span>
<span class="t" style="left:1687.44px;top:192.29px;font-size:25px;color:#212529;transform:scaleX(1.0223)">[Employee].[Epmolyee].[All Employees], [Employee].[Epmolyee].Levels.Count, LEAVES ) }</span>
<span class="t" style="left:240.50px;top:238.14px;font-size:25px;color:#212529">{</span>
<span class="t" style="left:255.69px;top:238.14px;font-size:25px;color:#212529;transform:scaleX(1.0554)">[Account].[Account].[Net</span>
<span class="t" style="left:545.94px;top:238.14px;font-size:25px;color:#212529;transform:scaleX(1.0464)">Income],</span>
<span class="t" style="left:653.91px;top:238.14px;font-size:25px;color:#212529">Descendants(</span>
<span class="t" style="left:815.69px;top:238.14px;font-size:25px;color:#212529;transform:scaleX(1.0554)">[Account].[Account].[Net</span>
<span class="t" style="left:1105.94px;top:238.14px;font-size:25px;color:#212529;transform:scaleX(1.0464)">Income],</span>
<span class="t" style="left:1214.04px;top:238.14px;font-size:25px;color:#212529;transform:scaleX(1.0249)">[Account].[Account].Levels.Count,</span>
<span class="t" style="left:1605.13px;top:238.14px;font-size:25px;color:#212529;transform:scaleX(0.8808)">LEAVES</span>
<span class="t" style="left:1695.56px;top:238.14px;font-size:25px;color:#212529">)</span>
<span class="t" style="left:1711.40px;top:238.14px;font-size:25px;color:#212529">}</span>
<span class="t" style="left:240.50px;top:283.99px;font-size:25px;color:#212529">{</span>
<span class="t" style="left:256.98px;top:283.99px;font-size:25px;color:#212529;transform:scaleX(1.0050)">TM1SubsetAll(</span>
<span class="t" style="left:430.78px;top:283.99px;font-size:25px;color:#212529">[Year]</span>
<span class="t" style="left:501.26px;top:283.99px;font-size:25px;color:#212529">)</span>
<span class="t" style="left:515.13px;top:283.99px;font-size:25px;color:#212529">}</span>
<span class="t" style="left:98.55px;top:55.58px;font-size:24px;color:#fff;transform:scaleX(0.9401)">1,036 ms</span>
<span class="t" style="left:98.55px;top:101.43px;font-size:24px;color:#fff;transform:scaleX(0.9401)">1,045 ms</span>
<span class="t" style="left:98.55px;top:147.28px;font-size:24px;color:#fff;transform:scaleX(0.9401)">1,182 ms</span>
<span class="t" style="left:98.55px;top:238.98px;font-size:24px;color:#fff;transform:scaleX(0.9401)">1,075 ms</span>
<span class="t" style="left:98.55px;top:284.83px;font-size:24px;color:#fff;transform:scaleX(0.9401)">1,122 ms</span>
</div>
<div class="abs sb-t" style="left:1861px;top:762px;width:19px;height:318px"></div>
<div class="abs sb-h" style="left:1861px;top:762px;width:19px;height:132px"></div>
<div class="abs sb-t" style="left:35px;top:1063px;width:1826px;height:17px"></div>
<div class="abs sb-h" style="left:35px;top:1063px;width:375px;height:17px"></div>
</div>
</body>
</html>
